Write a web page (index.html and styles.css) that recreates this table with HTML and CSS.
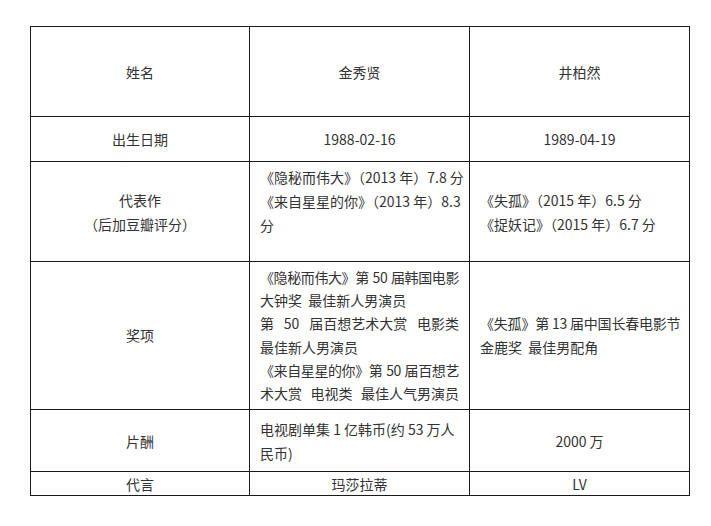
FILE: index.html
```html
<!DOCTYPE html>
<html lang="zh-CN">
<head>
<meta charset="utf-8">
<title>对比</title>
<link rel="stylesheet" href="styles.css">
</head>
<body>
<table class="cmp">
  <colgroup>
    <col class="c1"><col class="c2"><col class="c3">
  </colgroup>
  <tr class="r-name">
    <td class="center">姓名</td>
    <td class="center">金秀贤</td>
    <td class="center">井柏然</td>
  </tr>
  <tr class="r-birth">
    <td class="center">出生日期</td>
    <td class="center">1988-02-16</td>
    <td class="center">1989-04-19</td>
  </tr>
  <tr class="r-works">
    <td class="center">代表作<br>（后加豆瓣评分）</td>
    <td class="text top">
      <span class="ln j"><span class="g">《隐秘而伟大》（2013</span> <span class="g">年）7.8</span> <span class="g">分</span></span>
      <span class="ln j"><span class="g">《来自星星的你》（2013</span> <span class="g">年）8.3</span></span>
      <span class="ln">分</span>
    </td>
    <td class="text">
      <span class="ln">《失孤》（2015 年）6.5 分</span>
      <span class="ln">《捉妖记》（2015 年）6.7 分</span>
    </td>
  </tr>
  <tr class="r-awards">
    <td class="center">奖项</td>
    <td class="text">
      <span class="ln j tight"><span class="g">《隐秘而伟大》第</span> <span class="g">50</span> <span class="g">届韩国电影</span></span>
      <span class="ln">大钟奖&nbsp; 最佳新人男演员</span>
      <span class="ln j"><span class="g">第</span> <span class="g">50</span> <span class="g">届百想艺术大赏</span> <span class="g">电影类</span></span>
      <span class="ln">最佳新人男演员</span>
      <span class="ln j tight"><span class="g">《来自星星的你》第</span> <span class="g">50</span> <span class="g">届百想艺</span></span>
      <span class="ln j"><span class="g">术大赏</span> <span class="g">电视类</span> <span class="g">最佳人气男演员</span></span>
    </td>
    <td class="text">
      <span class="ln snug">《失孤》第 13 届中国长春电影节</span>
      <span class="ln">金鹿奖&nbsp; 最佳男配角</span>
    </td>
  </tr>
  <tr class="r-pay">
    <td class="center">片酬</td>
    <td class="text">
      <span class="ln">电视剧单集 1 亿韩币(约 53 万人</span>
      <span class="ln">民币)</span>
    </td>
    <td class="center">2000 万</td>
  </tr>
  <tr class="r-ad">
    <td class="center">代言</td>
    <td class="center">玛莎拉蒂</td>
    <td class="center">LV</td>
  </tr>
</table>
</body>
</html>
```

FILE: styles.css
```css
html, body {
  margin: 0;
  padding: 0;
  background: #ffffff;
}

body {
  font-family: "Noto Sans CJK SC", "Noto Sans", "Liberation Sans", sans-serif;
  font-size: 14px;
  color: #333333;
}

.cmp {
  border-collapse: collapse;
  table-layout: fixed;
  width: 659px;
  margin: 26px 0 0 30px;
}

.c1 { width: 219px; }
.c2 { width: 220px; }
.c3 { width: 220px; }

.cmp td {
  border: 1px solid #1a1a1a;
  padding: 0 10px;
  vertical-align: middle;
  line-height: 24px;
}

.center {
  text-align: center;
}

.text {
  text-align: left;
}

.ln {
  display: block;
  white-space: nowrap;
}

.g {
  display: inline-block;
}

.j {
  text-align: justify;
  text-align-last: justify;
  text-justify: inter-word;
}

.tight {
  letter-spacing: -0.4px;
}

.snug {
  letter-spacing: -0.2px;
}

.r-name td { height: 89px; }
.r-birth td { height: 44px; }
.r-works td { height: 99px; }
.r-works td.top {
  vertical-align: top;
  padding-top: 3px;
  height: 96px;
}
.r-awards td { height: 147px; line-height: 23.3px; }
.r-pay td { height: 61px; }
.r-ad td { height: 23px; line-height: 22px; }
```
